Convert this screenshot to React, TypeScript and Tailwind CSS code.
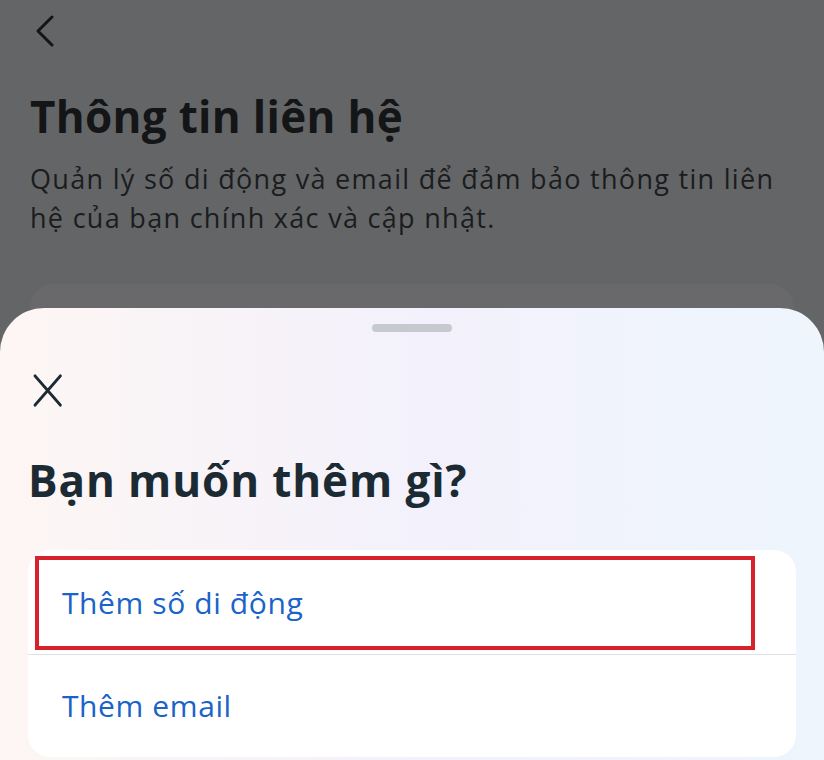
const font = { fontFamily: '"Open Sans", "Noto Sans", sans-serif' }

export default function App() {
  return (
    <div className="relative h-[760px] w-[824px] overflow-hidden bg-[#646567]" style={font}>
      {/* dimmed page behind the sheet */}
      <div className="flex flex-col px-[30px]">
        <button type="button" className="mt-[14px] flex h-[34px] w-[30px] items-center text-[#141517]">
          <svg width="24" height="34" viewBox="0 0 24 34" fill="none" stroke="currentColor" strokeWidth="3" strokeLinecap="round" strokeLinejoin="round">
            <path d="M22 3 8 17l14 14" />
          </svg>
        </button>
        <h1 className="mt-[42px] text-[44px] font-bold leading-[52px] tracking-[0.3px] text-[#141517]">
          Thông tin liên hệ
        </h1>
        <p className="mt-[17px] text-[27px] leading-[39px] tracking-[1.3px] text-[#1b1c1e]">
          Quản lý số di động và email để đảm bảo thông tin liên hệ của bạn chính xác và cập nhật.
        </p>
        <div className="mt-[47px] h-[60px] rounded-[24px] bg-[#69696b]" />
      </div>

      {/* bottom sheet */}
      <div className="absolute inset-x-0 top-[308px] bottom-0 rounded-t-[44px] bg-gradient-to-r from-[#fdf6f4] via-[#f3f1fb] to-[#eef5fd]">
        <div className="flex flex-col px-[28px]">
          <div className="mt-[16px] flex justify-center">
            <span className="h-[8px] w-[80px] rounded-full bg-[#c6c9ce]" />
          </div>
          <button type="button" className="mt-[42px] flex h-[34px] w-[40px] items-center text-[#1c2b33]">
            <svg width="36" height="34" viewBox="0 0 36 34" fill="none" stroke="currentColor" strokeWidth="3.2" strokeLinecap="round">
              <path d="M9 2 37 31M37 2 9 31" transform="translate(-1 0) scale(0.9 1)" />
            </svg>
          </button>
          <h2 className="mt-[46px] text-[44px] font-bold leading-[52px] tracking-[0.9px] text-[#1c2b33]">
            Bạn muốn thêm gì?
          </h2>
          <div className="mt-[44px] overflow-hidden rounded-[22px] bg-white">
            <div className="px-[7px] pt-[6px] pb-[4px]">
              <div className="flex h-[94px] w-[720px] items-center border-[4px] border-[#d7222c] px-[23px]">
                <span className="text-[30px] font-medium leading-none tracking-[0.6px] text-[#1a63c7]">Thêm số di động</span>
              </div>
            </div>
            <div className="h-px bg-[#dfe1e4]" />
            <div className="flex h-[102px] items-center px-[34px]">
              <span className="text-[30px] font-medium leading-none tracking-[0.6px] text-[#1a63c7]">Thêm email</span>
            </div>
          </div>
        </div>
      </div>
    </div>
  )
}
